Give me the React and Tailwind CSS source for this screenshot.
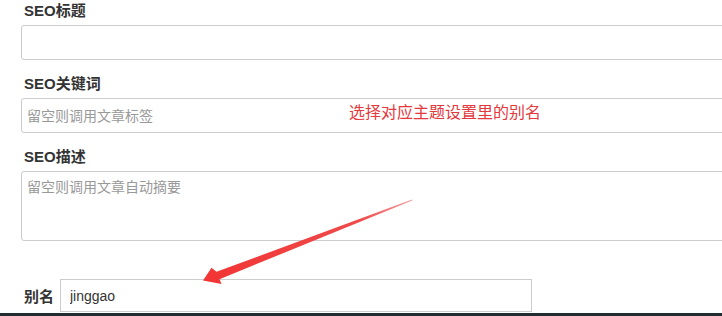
import React from "react";

// SEO fields panel with red annotation arrow
const font = { fontFamily: '"Liberation Sans", "Noto Sans CJK SC", sans-serif' };

function Label({ children }) {
  return <div className="h-[22px] text-[15px] leading-[22px] font-bold text-[#333]">{children}</div>;
}

export default function App() {
  return (
    <div className="relative w-[722px] h-[316px] overflow-hidden bg-white flex flex-col" style={font}>
      <div className="pl-[21px] flex flex-col">
        <div className="pl-[3px]">
          <Label>SEO标题</Label>
        </div>
        <input
          className="mt-[3px] w-[740px] h-[35px] border border-[#ccc] rounded-[3px] px-[6px] text-[14px] outline-none"
          style={font}
        />

        <div className="pl-[3px] mt-[13px]">
          <Label>SEO关键词</Label>
        </div>
        <input
          className="mt-[3px] w-[740px] h-[35px] border border-[#ccc] rounded-[3px] px-[5px] text-[14px] text-[#333] placeholder:text-[#999] outline-none"
          style={font}
          placeholder="留空则调用文章标签"
        />

        <div className="pl-[3px] mt-[13px]">
          <Label>SEO描述</Label>
        </div>
        <textarea
          className="mt-[3px] w-[740px] h-[70px] border border-[#ccc] rounded-[3px] px-[5px] pt-[5px] text-[14px] leading-[21px] text-[#333] placeholder:text-[#999] outline-none resize-none"
          style={font}
          placeholder="留空则调用文章自动摘要"
        />

        <div className="mt-[38px] flex items-center">
          <div className="w-[39px] pl-[3px] text-[15px] font-bold text-[#333] leading-[22px] pt-[3px]">别名</div>
          <input
            className="w-[472px] h-[33px] border border-[#ccc] px-[9px] text-[14px] text-[#333] outline-none"
            style={font}
            defaultValue="jinggao"
          />
        </div>
      </div>
      <div className="mt-auto h-[3px] bg-[#222b2e]" />

      {/* annotation overlay */}
      <div className="absolute left-[349px] top-[102px] text-[16px] leading-[22px] text-[#e4383c]">
        选择对应主题设置里的别名
      </div>
      <svg className="absolute left-0 top-0 pointer-events-none" width="722" height="316">
        <defs>
          <linearGradient id="ag" x1="412" y1="200" x2="203" y2="281" gradientUnits="userSpaceOnUse">
            <stop offset="0" stopColor="#f6a0a0" />
            <stop offset="0.25" stopColor="#ef4a4a" />
            <stop offset="1" stopColor="#f23434" />
          </linearGradient>
        </defs>
        <polygon
          points="412,199.6 216.5,271.8 211.5,267.8 203,280.5 221.5,284 219.5,279.2 412.3,200.4"
          fill="url(#ag)"
        />
      </svg>
    </div>
  );
}
